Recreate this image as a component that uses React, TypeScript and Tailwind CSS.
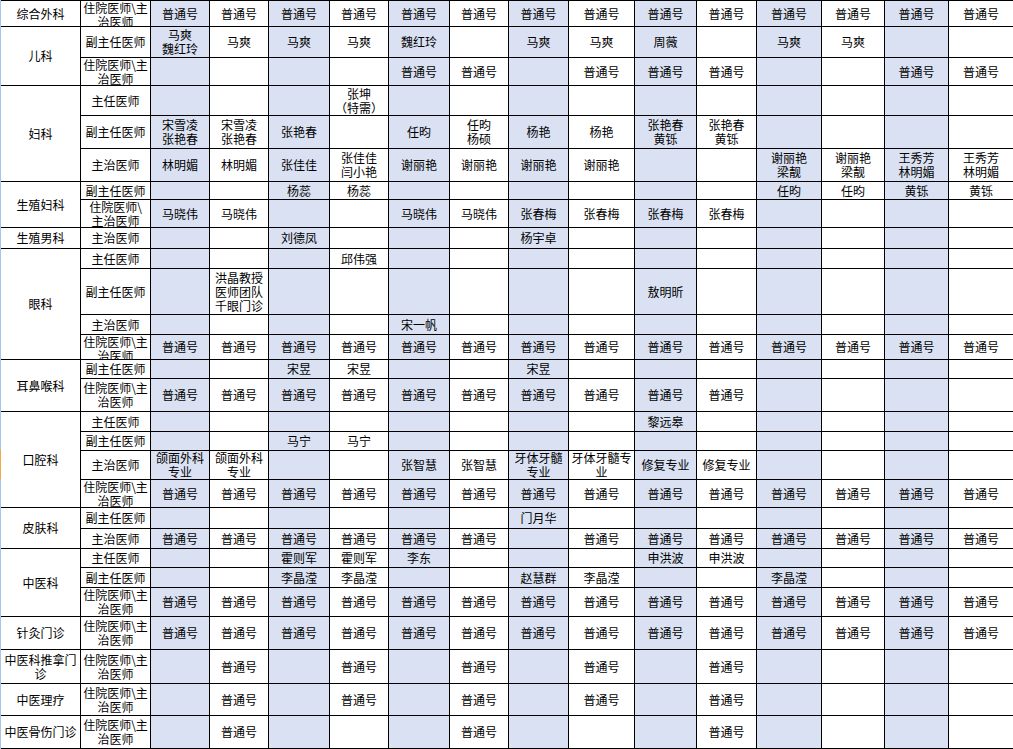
import React from 'react';
import clsx from 'clsx';

type Row = {
  dept?: string;
  span?: number;
  title: string;
  h: number;
  cells: string[];
};

const P = '普通号';
const E = '';
const RES = '住院医师\\主\n治医师';
const ALL = Array(14).fill(P);

const rows: Row[] = [
  { dept: '综合外科', span: 1, title: RES, h: 25, cells: ALL },
  { dept: '儿科', span: 2, title: '副主任医师', h: 30, cells: ['马爽\n魏红玲', '马爽', '马爽', '马爽', '魏红玲', E, '马爽', '马爽', '周薇', E, '马爽', '马爽', E, E] },
  { title: RES, h: 27, cells: [E, E, E, E, P, P, E, P, P, P, E, E, P, P] },
  { dept: '妇科', span: 3, title: '主任医师', h: 29, cells: [E, E, E, '张坤\n（特需）', E, E, E, E, E, E, E, E, E, E] },
  { title: '副主任医师', h: 32, cells: ['宋雪凌\n张艳春', '宋雪凌\n张艳春', '张艳春', E, '任昀', '任昀\n杨硕', '杨艳', '杨艳', '张艳春\n黄铄', '张艳春\n黄铄', E, E, E, E] },
  { title: '主治医师', h: 32, cells: ['林明媚', '林明媚', '张佳佳', '张佳佳\n闫小艳', '谢丽艳', '谢丽艳', '谢丽艳', '谢丽艳', E, E, '谢丽艳\n梁靓', '谢丽艳\n梁靓', '王秀芳\n林明媚', '王秀芳\n林明媚'] },
  { dept: '生殖妇科', span: 2, title: '副主任医师', h: 17, cells: [E, E, '杨蕊', '杨蕊', E, E, E, E, E, E, '任昀', '任昀', '黄铄', '黄铄'] },
  { title: '住院医师\\\n主治医师', h: 27, cells: ['马晓伟', '马晓伟', E, E, '马晓伟', '马晓伟', '张春梅', '张春梅', '张春梅', '张春梅', E, E, E, E] },
  { dept: '生殖男科', span: 1, title: '主治医师', h: 20, cells: [E, E, '刘德凤', E, E, E, '杨宇卓', E, E, E, E, E, E, E] },
  { dept: '眼科', span: 4, title: '主任医师', h: 19, cells: [E, E, E, '邱伟强', E, E, E, E, E, E, E, E, E, E] },
  { title: '副主任医师', h: 45, cells: [E, '洪晶教授\n医师团队\n千眼门诊', E, E, E, E, E, E, '敖明昕', E, E, E, E, E] },
  { title: '主治医师', h: 19, cells: [E, E, E, E, '宋一帆', E, E, E, E, E, E, E, E, E] },
  { title: RES, h: 24, cells: ALL },
  { dept: '耳鼻喉科', span: 2, title: '副主任医师', h: 18, cells: [E, E, '宋昱', '宋昱', E, E, '宋昱', E, E, E, E, E, E, E] },
  { title: RES, h: 32, cells: [P, P, P, P, P, P, P, P, P, P, E, E, E, E] },
  { dept: '口腔科', span: 4, title: '主任医师', h: 19, cells: [E, E, E, E, E, E, E, E, '黎远皋', E, E, E, E, E] },
  { title: '副主任医师', h: 18, cells: [E, E, '马宁', '马宁', E, E, E, E, E, E, E, E, E, E] },
  { title: '主治医师', h: 28, cells: ['颌面外科\n专业', '颌面外科\n专业', E, E, '张智慧', '张智慧', '牙体牙髓\n专业', '牙体牙髓专\n业', '修复专业', '修复专业', E, E, E, E] },
  { title: RES, h: 27, cells: ALL },
  { dept: '皮肤科', span: 2, title: '副主任医师', h: 20, cells: [E, E, E, E, E, E, '门月华', E, E, E, E, E, E, E] },
  { title: '主治医师', h: 19, cells: [P, P, P, P, P, P, E, P, P, P, P, P, P, P] },
  { dept: '中医科', span: 3, title: '主任医师', h: 18, cells: [E, E, '霍则军', '霍则军', '李东', E, E, E, '申洪波', '申洪波', E, E, E, E] },
  { title: '副主任医师', h: 19, cells: [E, E, '李晶滢', '李晶滢', E, E, '赵慧群', '李晶滢', E, E, '李晶滢', E, E, E] },
  { title: RES, h: 28, cells: ALL },
  { dept: '针灸门诊', span: 1, title: RES, h: 32, cells: ALL },
  { dept: '中医科推拿门\n诊', span: 1, title: RES, h: 33, cells: [E, P, E, P, E, P, E, P, E, P, E, E, E, E] },
  { dept: '中医理疗', span: 1, title: RES, h: 31, cells: [E, P, E, P, E, P, E, P, E, P, E, E, E, E] },
  { dept: '中医骨伤门诊', span: 1, title: RES, h: 32, cells: [E, P, E, E, E, P, E, E, E, P, E, E, E, E] },
];

const spanClass: Record<number, string> = {
  1: 'row-span-1',
  2: 'row-span-2',
  3: 'row-span-3',
  4: 'row-span-4',
};

function Cell({ text, h, className }: { text: string; h: number; className?: string }) {
  const lines = text ? text.split('\n').length : 0;
  // Excel shows the top of text that doesn't fit
  const overflow = lines * 14 > h;
  return (
    <div
      className={clsx(
        'flex justify-center overflow-hidden whitespace-pre-line text-center leading-[14px]',
        overflow ? 'items-start' : 'items-center',
        className,
      )}
    >
      {text}
    </div>
  );
}

export default function App() {
  return (
    <div className="flex h-[749px] w-[1013px] overflow-hidden bg-white font-['Noto_Sans_CJK_SC',sans-serif] text-[12px] text-black">
      <div className="flex w-px flex-col">
        <div className="h-[450px] bg-[#a9c4eb]" />
        <div className="h-[29px] bg-[#f0a848]" />
        <div className="flex-1 bg-[#a9c4eb]" />
      </div>
      <div className="grid grid-cols-[79px_69px_58px_58px_60px_58px_60px_58px_59px_65px_61px_59px_64px_62px_63px_64px] grid-rows-[25px_30px_27px_29px_32px_32px_17px_27px_20px_19px_45px_19px_24px_18px_32px_19px_18px_28px_27px_20px_19px_18px_19px_28px_32px_33px_31px_32px] gap-px bg-black py-px">
        {rows.map((row, r) => {
          let deptH = 0;
          if (row.dept) {
            const n = row.span ?? 1;
            for (let k = 0; k < n; k++) deptH += rows[r + k].h + (k ? 1 : 0);
          }
          return (
            <React.Fragment key={r}>
              {row.dept && (
                <Cell text={row.dept} h={deptH} className={clsx('bg-white', spanClass[row.span ?? 1])} />
              )}
              <Cell text={row.title} h={row.h} className="bg-white" />
              {row.cells.map((c, i) => (
                <Cell
                  key={i}
                  text={c}
                  h={row.h}
                  className={i % 2 === 0 ? 'bg-[#d9e1f2]' : 'bg-white'}
                />
              ))}
            </React.Fragment>
          );
        })}
      </div>
    </div>
  );
}
